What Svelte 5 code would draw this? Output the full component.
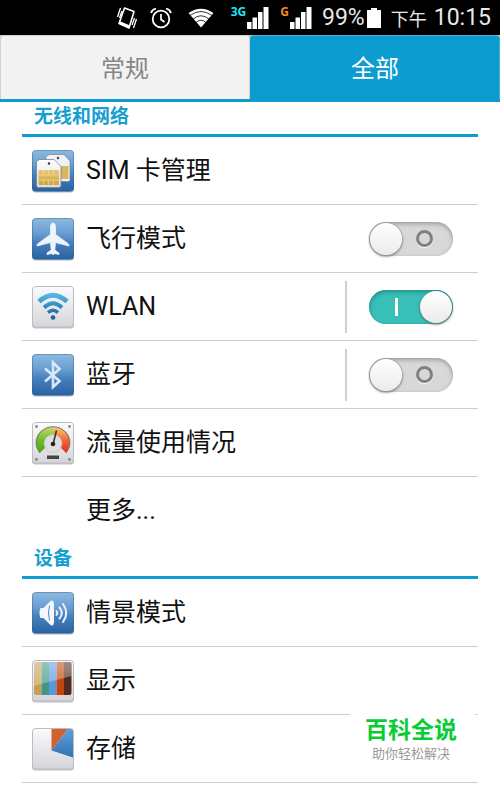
<script>
  let tab = $state('all');
  const sections = $state([
    {
      title: '无线和网络',
      rows: [
        { id: 'sim', name: 'SIM 卡管理' },
        { id: 'plane', name: '飞行模式', toggle: true, on: false },
        { id: 'wlan', name: 'WLAN', toggle: true, on: true, split: true },
        { id: 'bluetooth', name: '蓝牙', toggle: true, on: false, split: true },
        { id: 'data', name: '流量使用情况' },
        { id: 'more', name: '更多...' }
      ]
    },
    {
      title: '设备',
      rows: [
        { id: 'sound', name: '情景模式' },
        { id: 'display', name: '显示' },
        { id: 'storage', name: '存储' }
      ]
    }
  ]);
  const blueTiles = ['sim', 'plane', 'bluetooth', 'sound'];
</script>

{#snippet bars()}
  <svg class="bars" width="22" height="22" viewBox="0 0 22 22" fill="#fff" aria-hidden="true">
    <path d="M0 15h4.500v7H0zM5.500 10.500h4.500V22H5.500zM11 5h4.500v17H11zM16.500 0H21.500v22h-5z" />
  </svg>
{/snippet}

{#snippet icon(id)}
  <svg class="icon" width="44" height="44" viewBox="0 0 44 44" aria-hidden="true">
    {#if id !== 'more'}
      <rect x="1" y="2" width="42" height="41.500" rx="3.500" fill={blueTiles.includes(id) ? '#8b9db1' : '#a9a9ad'} opacity=".7" />
      <rect x="1.500" y="1.500" width="41" height="40.500" rx="3" fill={blueTiles.includes(id) ? 'url(#blue)' : 'url(#silver)'} stroke={blueTiles.includes(id) ? 'url(#rim)' : '#bcbcc0'} />
    {/if}
    {#if id === 'sim'}
      <path d="M18.500 5.500H33L39 12v18.500q0 2-2 2H17q-2 0-2-2V7.500z" fill="#f1f1f1" stroke="#6f8295" stroke-width=".7" />
      <circle cx="27" cy="9" r="1.200" fill="#444" />
      <path d="M29 17h8.500v13H29z" fill="#d9b65c" />
      <path d="M8.500 10.500H23L30 17.500v19q0 2-2 2H7.500q-2 0-2-2V12.500z" fill="url(#card)" stroke="#6f8295" stroke-width=".8" />
      <circle cx="18" cy="14.500" r="1.200" fill="#333" />
      <rect x="7.500" y="21" width="20.500" height="15" rx="1" fill="url(#gold)" />
      <path d="M7.500 26h20.500M12.500 21v5M17.500 21v5M22.500 21v5M12.500 31v5M17.500 31v5M22.500 31v5M7.500 31h20.500" stroke="#f3e2a4" stroke-width=".6" />
    {:else if id === 'plane'}
      <path d="M22 6c1.700 0 2.500 2 2.500 4v7.500L37 26.500c.8.700 1 1.500 1 2.500l-13.500-3.500-.7 7.500 4.200 3v1.500L23 36.500 22 38l-1-1.500-5 1V36l4.200-3-.7-7.500L6 29c0-1 .2-1.800 1-2.500l12.500-9V10c0-2 .8-4 2.500-4z" fill="#edf4fa" stroke="#edf4fa" stroke-width=".8" />
    {:else if id === 'wlan'}
      <g fill="none" stroke="url(#waves)">
        <path d="M8 16.500Q22 4 36 16.500" stroke-width="5" />
        <path d="M13 22.500Q22 14 31 22.500" stroke-width="4" />
        <path d="M17 27.500Q22 23 27 27.500" stroke-width="3.500" />
      </g>
      <circle cx="22" cy="32.500" r="2.300" fill="#1863a0" />
    {:else if id === 'bluetooth'}
      <path d="M14 15.500 28.500 28 22 34V9.500l6.500 6.500L14 28.500" fill="none" stroke="#d7e9f7" stroke-width="2.600" />
    {:else if id === 'data'}
      <path d="M8.800 32A15.500 15.500 0 0 1 22 6v9a8 8 0 0 0-7 11z" fill="url(#green)" />
      <path d="M22 6a15.500 15.500 0 0 1 13.200 26L29 26a8 8 0 0 0-7-11z" fill="url(#red)" />
      <path d="M8.800 32A16.500 16.500 0 1 1 35.200 32" fill="none" stroke="#777" stroke-width="1" />
      <circle cx="22" cy="22.500" r="9" fill="#dedee0" stroke="#bbb" stroke-width=".6" />
      <path d="M22 23.500 25.500 9.500" stroke="#333" stroke-width="1.500" />
      <circle cx="22" cy="23" r="2.300" fill="#222" />
      <rect x="16" y="34.500" width="12" height="3.500" fill="#444" />
      <g fill="#888"><circle cx="5.500" cy="5.500" r="1.400" /><circle cx="38.500" cy="5.500" r="1.400" /><circle cx="5.500" cy="38.500" r="1.400" /><circle cx="38.500" cy="38.500" r="1.400" /></g>
    {:else if id === 'sound'}
      <path d="M9.500 17H12.500L19.500 10q3-2 3.500 3v18q-.5 5-3.500 3L12.500 27H9.500q-2-5 0-10z" fill="#f4f8fc" />
      <path d="M18.500 14.500q-2 7.500 0 15" fill="none" stroke="#4f89be" stroke-width="1" />
      <path d="M25.500 20q1.500 2 0 4M28.500 16.500q4.500 5.500 0 11M32 13q6.500 9 0 18" fill="none" stroke="#e9f3fb" stroke-width="2" stroke-linecap="round" />
    {:else if id === 'display'}
      <path d="M3 5q0-2 2-2h5.500v33H5q-2 0-2-2z" fill="#c6a052" />
      <path d="M10.500 3H18v33h-7.500z" fill="#3e9683" />
      <path d="M18 3h7.500v33H18z" fill="#5a98de" />
      <path d="M25.500 3H33v33h-7.500z" fill="#c04510" />
      <path d="M33 3h5.500Q40.500 3 40.500 5v29q0 2-2 2H33z" fill="#502c1f" />
      <path d="M5 3h33.500q2 0 2 2v12L3 27V5q0-2 2-2z" fill="url(#sheen)" />
    {:else if id === 'storage'}
      <path d="M20.500 2H37L20.500 23.500z" fill="#d26130" />
      <path d="M37 2h3q2 0 2 2v26.500l-21.500-7z" fill="url(#pie)" />
    {/if}
  </svg>
{/snippet}

<svg class="defs" width="0" height="0" aria-hidden="true">
  <defs>
    <linearGradient id="blue" x2="0" y2="1"><stop stop-color="#8db9e0" /><stop offset=".35" stop-color="#6a9fd2" /><stop offset=".6" stop-color="#4580bb" /><stop offset="1" stop-color="#2963a2" /></linearGradient>
    <linearGradient id="rim" x2="0" y2="1"><stop stop-color="#6794bd" /><stop offset="1" stop-color="#2b609b" /></linearGradient>
    <linearGradient id="silver" x2="0" y2="1"><stop stop-color="#fbfbfc" /><stop offset="1" stop-color="#d5d4da" /></linearGradient>
    <linearGradient id="card" x2="0" y2="1"><stop stop-color="#fff" /><stop offset="1" stop-color="#dedede" /></linearGradient>
    <linearGradient id="gold" x2="0" y2="1"><stop stop-color="#e8ca72" /><stop offset="1" stop-color="#cda544" /></linearGradient>
    <linearGradient id="waves" gradientUnits="userSpaceOnUse" x1="0" y1="8" x2="0" y2="32"><stop stop-color="#56bfe8" /><stop offset="1" stop-color="#17609d" /></linearGradient>
    <linearGradient id="green" x2="0" y2="1"><stop stop-color="#c4d969" /><stop offset=".5" stop-color="#6fbe2c" /><stop offset="1" stop-color="#48a50d" /></linearGradient>
    <linearGradient id="red" x2="0" y2="1"><stop stop-color="#f5d06b" /><stop offset=".5" stop-color="#f26a3a" /><stop offset="1" stop-color="#e92b16" /></linearGradient>
    <linearGradient id="sheen" x2="0" y2="1"><stop stop-color="#fff" stop-opacity=".45" /><stop offset="1" stop-color="#fff" stop-opacity=".25" /></linearGradient>
    <linearGradient id="pie" x2="0" y2="1"><stop stop-color="#5da0dc" /><stop offset="1" stop-color="#3273b1" /></linearGradient>
  </defs>
</svg>

<div class="screen">
  <header class="status">
    <svg width="22" height="24" viewBox="0 0 22 24" fill="none" stroke="#fff" aria-hidden="true">
      <path d="M8.500 2 18 5.500 13 22 3 17.500z" stroke-width="1.600" stroke-linejoin="round" />
      <path d="M3.500 16.500 13 20.500" stroke-width="2.500" />
      <path d="M4.500 2 1.500 11M6 5 3.500 12M20.500 13l-3 9M18.500 12 16 19" stroke-width="1.300" />
    </svg>
    <svg class="clock" width="22" height="22" viewBox="0 0 22 22" fill="none" stroke="#fff" aria-hidden="true">
      <circle cx="11" cy="12" r="8.300" stroke-width="1.800" />
      <path d="M11 7v5.500l3.500 2.500" stroke-width="1.700" />
      <path d="M1 6Q2 2.500 6 1.500M21 6Q20 2.500 16 1.500" stroke-width="1.800" />
    </svg>
    <svg class="wifi" width="26" height="20" viewBox="0 0 26 20" aria-hidden="true">
      <path d="M.5 5Q13-3.500 25.500 5L13 19.500z" fill="#fff" />
      <path d="M2 7.500Q13-.5 24 7.500M5 11Q13 4.500 21 11M8 14.500Q13 10 18 14.500" fill="none" stroke="#000" stroke-width=".8" />
    </svg>
    <span class="net cyan">3G</span>
    {@render bars()}
    <span class="net orange">G</span>
    {@render bars()}
    <span class="pct">99%</span>
    <svg class="battery" width="14" height="20" viewBox="0 0 14 20" fill="#fff" aria-hidden="true"><path d="M4 0h6v2h4v18H0V2h4z" /></svg>
    <span class="noon">下午</span>
    <span class="time">10:15</span>
  </header>

  <nav class="tabs">
    <button class:active={tab === 'general'} onclick={() => (tab = 'general')}>常规</button>
    <button class:active={tab === 'all'} onclick={() => (tab = 'all')}>全部</button>
  </nav>

  <main>
    {#each sections as section}
      <section>
        <h2>{section.title}</h2>
        <ul>
          {#each section.rows as row}
            <li>
              {#if row.toggle}
                <label class="name" for={row.id}>{@render icon(row.id)}<span>{row.name}</span></label>
                <span class="control" class:split={row.split}>
                  <input id={row.id} type="checkbox" role="switch" bind:checked={row.on} />
                </span>
              {:else}
                <a class="name" href="#{row.id}">{@render icon(row.id)}<span>{row.name}</span></a>
              {/if}
            </li>
          {/each}
        </ul>
      </section>
    {/each}
  </main>

  <aside class="badge">
    <strong>百科全说</strong>
    <span>助你轻松解决</span>
  </aside>
</div>

<style>
  :global(body) { margin: 0; background: #fff; }
  .defs { position: absolute; }
  .screen {
    position: relative;
    min-height: 100vh;
    box-sizing: border-box;
    background: #fff;
    font-family: Roboto, "Noto Sans CJK SC", sans-serif;
    color: #111;
  }
  .status {
    display: flex;
    align-items: center;
    justify-content: flex-end;
    height: 35px;
    padding-right: 9px;
    background: #000;
    color: #e8e8e8;
    white-space: nowrap;
  }
  .status svg { flex: none; }
  .clock { margin-left: 12px; }
  .wifi { margin-left: 16px; }
  .net { align-self: flex-start; margin-top: 4px; font: 700 12px/16px "Noto Sans", sans-serif; }
  .cyan { margin-left: 17px; color: #1ee3f5; }
  .orange { margin-left: 11px; color: #f58a1f; }
  .bars { margin-left: 1px; }
  .pct { margin-left: 10px; font-size: 23px; }
  .battery { margin-left: 2px; }
  .noon { margin-left: 10px; font-size: 18px; }
  .time { margin-left: 7px; font-size: 23px; }
  .tabs {
    display: flex;
    height: 64px;
    border-bottom: 3px solid #0d9cd0;
    background: #c9c9c9;
  }
  .tabs button {
    flex: 1;
    margin: 0;
    padding: 2px 0 0;
    border: 1px solid #d2d2d2;
    border-bottom: 0;
    border-radius: 4px 4px 0 0;
    background: #f2f2f2;
    color: #858585;
    font: 24px/36px Roboto, "Noto Sans CJK SC", sans-serif;
  }
  .tabs button.active { border-color: #4aaed4; border-left-color: #0d9cd0; background: #0d9cd0; color: #fff; }
  main { padding: 0 22px; }
  h2 {
    height: 32px;
    margin: 0;
    padding-left: 12px;
    border-bottom: 3px solid #0d9cd0;
    color: #169fd0;
    font-size: 19px;
    font-weight: 700;
    line-height: 30px;
  }
  ul { margin: 0; padding: 0; list-style: none; }
  li { display: flex; align-items: center; height: 67px; border-bottom: 1px solid #cecece; }
  section:first-child li:last-child { border-bottom: 0; }
  .name {
    display: flex;
    flex: 1;
    align-items: center;
    gap: 11px;
    padding-left: 9px;
    color: inherit;
    font-size: 25px;
    line-height: 36px;
    text-decoration: none;
  }
  .icon { flex: none; }
  .control { display: flex; align-items: center; height: 52px; padding: 0 25px 0 22px; }
  .split { border-left: 2px solid #d0d0d0; }
  input {
    display: flex;
    align-items: center;
    justify-content: space-between;
    box-sizing: border-box;
    width: 84px;
    height: 34px;
    margin: 0;
    appearance: none;
    border-radius: 17px;
    background: #d8d8d8;
    box-shadow: inset 0 2px 4px #7779, inset 0 0 1px #8886;
  }
  input::before {
    content: "";
    width: 32px;
    height: 32px;
    margin: 0 1px;
    border-radius: 50%;
    background: linear-gradient(#fff, #ebebeb);
    box-shadow: 0 1px 2px 1px #6669;
  }
  input::after {
    content: "";
    box-sizing: border-box;
    width: 17px;
    height: 17px;
    margin-right: 20px;
    border: 3px solid #808080;
    border-radius: 50%;
    box-shadow: 0 1px 1px #fff;
  }
  input:checked { flex-direction: row-reverse; background: #38bfb8; box-shadow: inset 0 2px 4px #186f6a99, inset 0 0 1px #228d87; }
  input:checked::after { width: 3px; height: 18px; margin: 0 0 0 26px; border: 0; border-radius: 0; background: #fff; box-shadow: none; }
  .badge {
    position: absolute;
    top: 710px;
    right: 25px;
    display: flex;
    flex-direction: column;
    align-items: center;
    width: 125px;
    height: 64px;
    padding: 4px 3px 0 0;
    box-sizing: border-box;
    background: #fff;
  }
  .badge strong { color: #08cc33; font-size: 23px; line-height: 34px; }
  .badge span { color: #999; font-size: 13px; line-height: 12px; }
</style>
